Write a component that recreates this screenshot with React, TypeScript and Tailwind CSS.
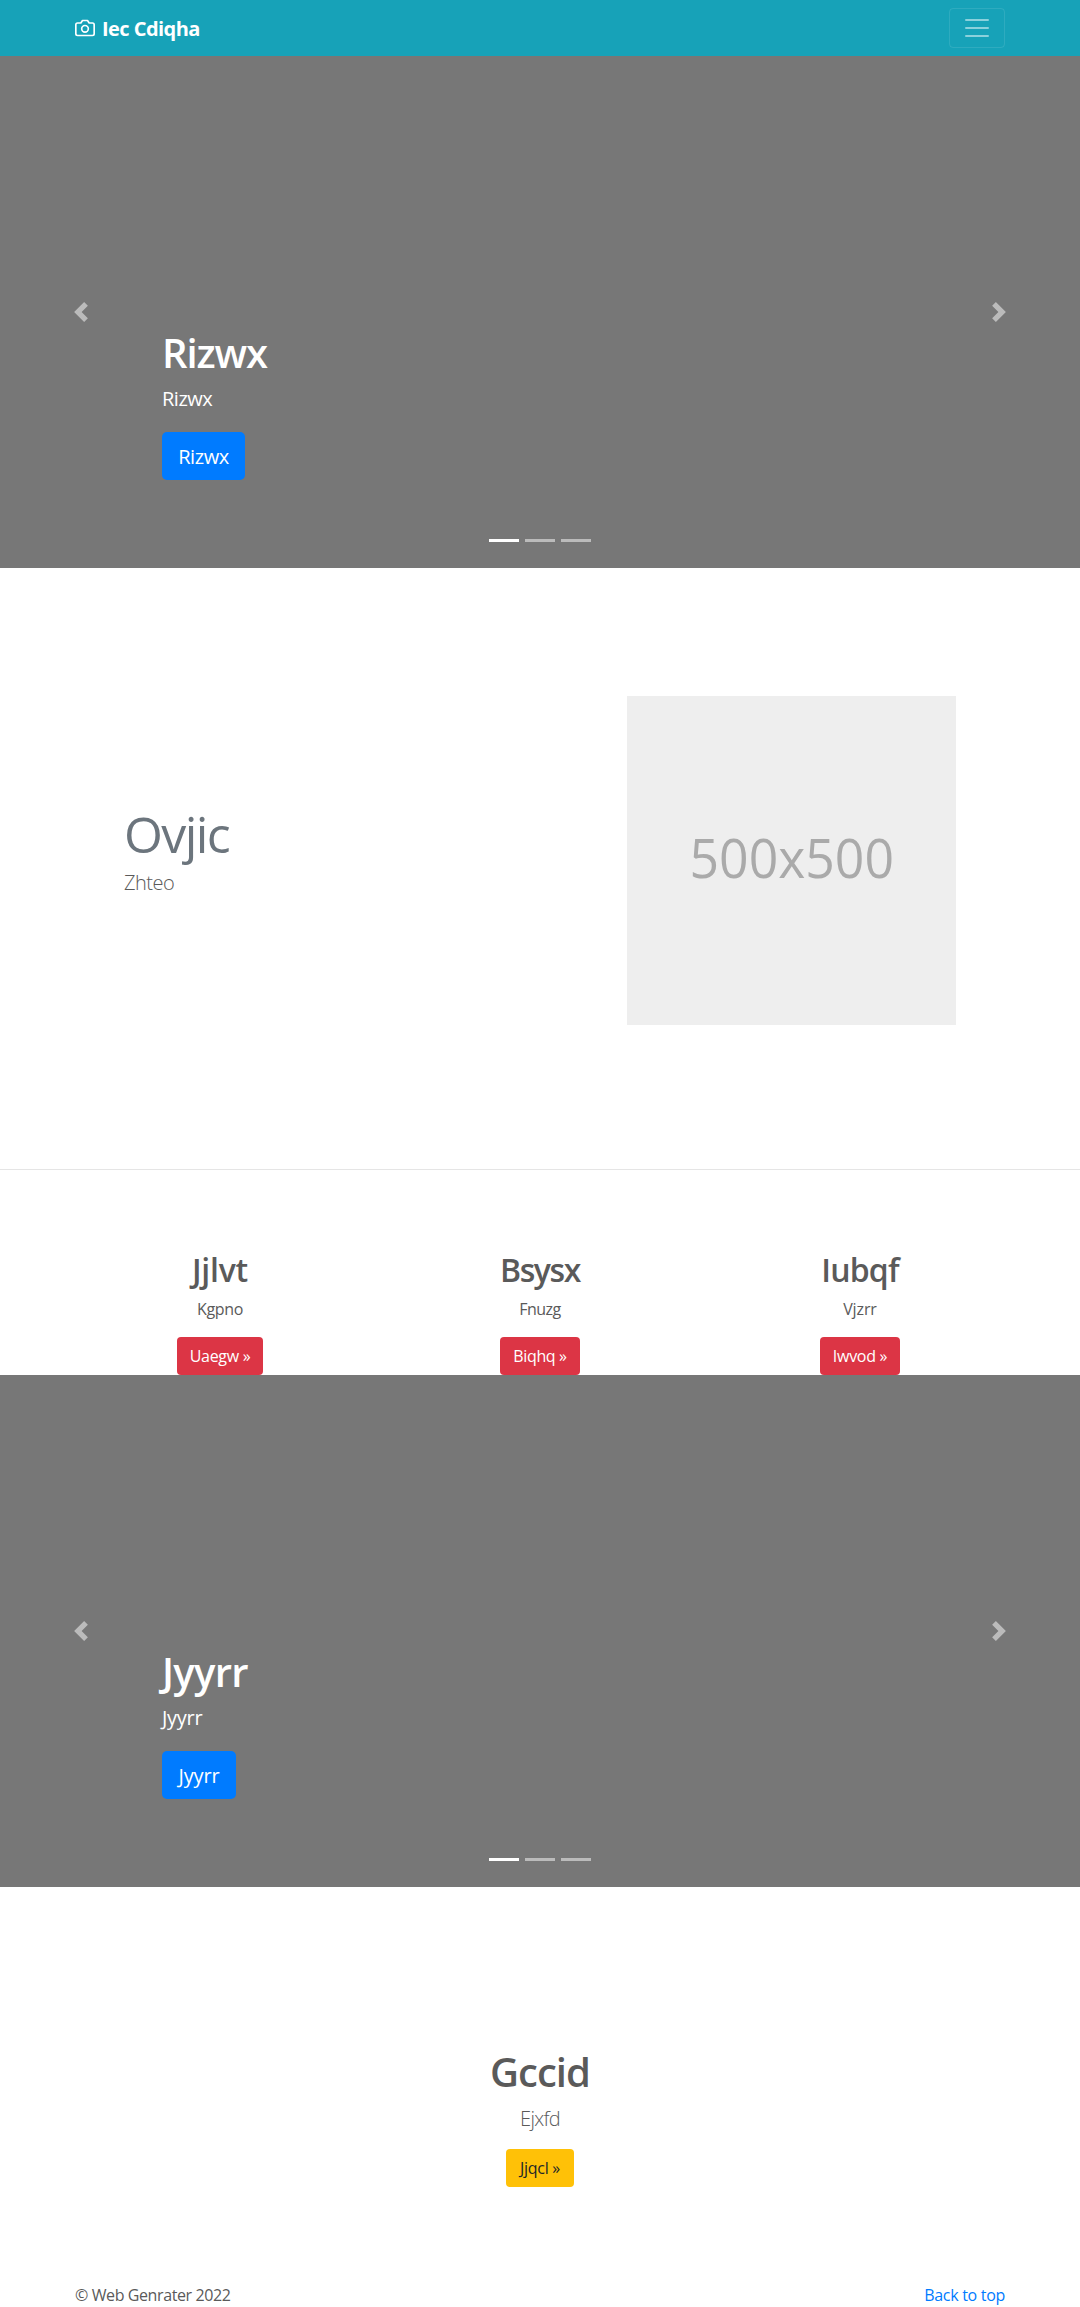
import React from "react";

function Chevron({ direction }: { direction: "left" | "right" }) {
  return (
    <svg className="size-5" viewBox="0 0 8 8" fill="#fff">
      {direction === "left" ? (
        <path d="M5.25 0l-4 4 4 4 1.5-1.5-2.5-2.5 2.5-2.5-1.5-1.5z" />
      ) : (
        <path d="M2.75 0l-1.5 1.5 2.5 2.5-2.5 2.5 1.5 1.5 4-4-4-4z" />
      )}
    </svg>
  );
}

type CarouselProps = { text: string; heading: string; copy: string; button: string };

function Carousel({ text, heading, copy, button }: CarouselProps) {
  return (
    <section className="relative h-[512px] bg-[#777] text-white">
      <button aria-label="Previous" className="absolute inset-y-0 left-0 flex w-[15%] items-center justify-center opacity-50">
        <Chevron direction="left" />
      </button>
      <div className="flex flex-col items-start px-[15%] pt-[273px]">
        <h1 className={`h-12 text-[40px] leading-[48px] font-semibold whitespace-nowrap ${heading}`}>{text}</h1>
        <p className={`mt-[7px] text-xl leading-[30px] whitespace-nowrap ${copy}`}>{text}</p>
        <a href="#" className={`mt-[18px] flex h-12 items-center justify-center rounded-[5px] bg-[#007bff] pt-0.5 text-xl whitespace-nowrap ${button}`}>
          {text}
        </a>
      </div>
      <button aria-label="Next" className="absolute inset-y-0 right-0 flex w-[15%] items-center justify-center opacity-50">
        <Chevron direction="right" />
      </button>
      <div className="absolute inset-x-0 bottom-[26px] flex justify-center gap-1.5">
        <span className="h-[3px] w-[30px] bg-white" />
        <span className="h-[3px] w-[30px] bg-white/50" />
        <span className="h-[3px] w-[30px] bg-white/50" />
      </div>
    </section>
  );
}

const features = [
  { title: "Jjlvt", text: "Kgpno", action: "Uaegw »", heading: "tracking-[-0.2px]", copy: "tracking-[-0.3px]", button: "w-[86px] tracking-[-0.3px]" },
  { title: "Bsysx", text: "Fnuzg", action: "Biqhq »", heading: "tracking-[-1.4px]", copy: "tracking-[-0.5px]", button: "w-20 tracking-[-0.35px]" },
  { title: "Iubqf", text: "Vjzrr", action: "Iwvod »", heading: "tracking-[-0.8px]", copy: "tracking-[-0.1px]", button: "w-20 tracking-[-0.3px]" },
];

export default function App() {
  return (
    <div className="h-[2307px] w-full overflow-hidden bg-white font-['Open_Sans','Noto_Sans',sans-serif] text-base text-[#5a5a5a]">
      <header className="flex h-14 items-center justify-between bg-[#17a2b8] px-[75px]">
        <a href="#" className="flex items-center text-white">
          <svg className="mr-[7px] size-5" viewBox="0 0 24 24" fill="none" stroke="currentColor" strokeWidth="2" strokeLinecap="round" strokeLinejoin="round">
            <path d="M23 19a2 2 0 0 1-2 2H3a2 2 0 0 1-2-2V8a2 2 0 0 1 2-2h4l2-3h6l2 3h4a2 2 0 0 1 2 2z" />
            <circle cx="12" cy="13" r="4" />
          </svg>
          <strong className="pt-0.5 text-xl leading-[30px] font-bold tracking-[-0.55px] whitespace-nowrap">Iec Cdiqha</strong>
        </a>
        <button aria-label="Toggle navigation" className="flex h-10 w-14 items-center justify-center rounded border border-white/10">
          <svg className="size-[30px]" viewBox="0 0 30 30" stroke="rgba(255,255,255,.5)" strokeWidth="2" strokeLinecap="round" strokeMiterlimit="10">
            <path d="M4 7h22M4 15h22M4 23h22" />
          </svg>
        </button>
      </header>

      <main>
        <Carousel text="Rizwx" heading="tracking-[-1.1px]" copy="tracking-[-0.5px]" button="w-[83px] tracking-[-0.4px]" />

        <section className="flex h-[602px] justify-between border-b border-black/10 pr-[124px] pl-[124px]">
          <div className="pt-[236px]">
            <h2 className="h-[60px] text-[50px] leading-[60px] font-normal tracking-[-1.6px] text-[#6c757d]">Ovjic</h2>
            <p className="mt-1 text-xl leading-[30px] font-light tracking-[-0.5px]">Zhteo</p>
          </div>
          <div className="mt-32 flex size-[329px] items-center justify-center bg-[#eee] pb-2 text-[55px] leading-none text-[#aaa]">
            <span className="scale-x-[.94] whitespace-nowrap">500x500</span>
          </div>
        </section>

        <section className="grid h-[205px] grid-cols-3 px-[60px] pt-[81px] text-center">
          {features.map((f) => (
            <div key={f.title} className="flex flex-col items-center">
              <h2 className={`text-[32px] leading-[38px] font-semibold whitespace-nowrap ${f.heading}`}>{f.title}</h2>
              <p className={`mt-2 leading-6 ${f.copy}`}>{f.text}</p>
              <a href="#" className={`mt-4 flex h-[38px] items-center justify-center rounded bg-[#dc3545] whitespace-nowrap text-white ${f.button}`}>
                {f.action}
              </a>
            </div>
          ))}
        </section>

        <Carousel text="Jyyrr" heading="tracking-[-0.7px]" copy="tracking-[-0.3px]" button="w-[74px] tracking-[-0.2px]" />

        <section className="flex h-[396px] flex-col items-center pt-[161px]">
          <h1 className="text-[40px] leading-[48px] font-semibold tracking-[-1px]">Gccid</h1>
          <p className="mt-2 text-xl leading-[30px] font-light tracking-[-0.7px]">Ejxfd</p>
          <a href="#" className="mt-[15px] flex h-[38px] w-[68px] items-center justify-center rounded bg-[#ffc107] tracking-[-0.3px] whitespace-nowrap text-[#212529]">
            Jjqcl »
          </a>
        </section>
      </main>

      <footer className="flex justify-between px-[75px] leading-6">
        <p className="tracking-[-0.4px]">© Web Genrater 2022</p>
        <a href="#" className="tracking-[-0.3px] text-[#007bff]">Back to top</a>
      </footer>
    </div>
  );
}
